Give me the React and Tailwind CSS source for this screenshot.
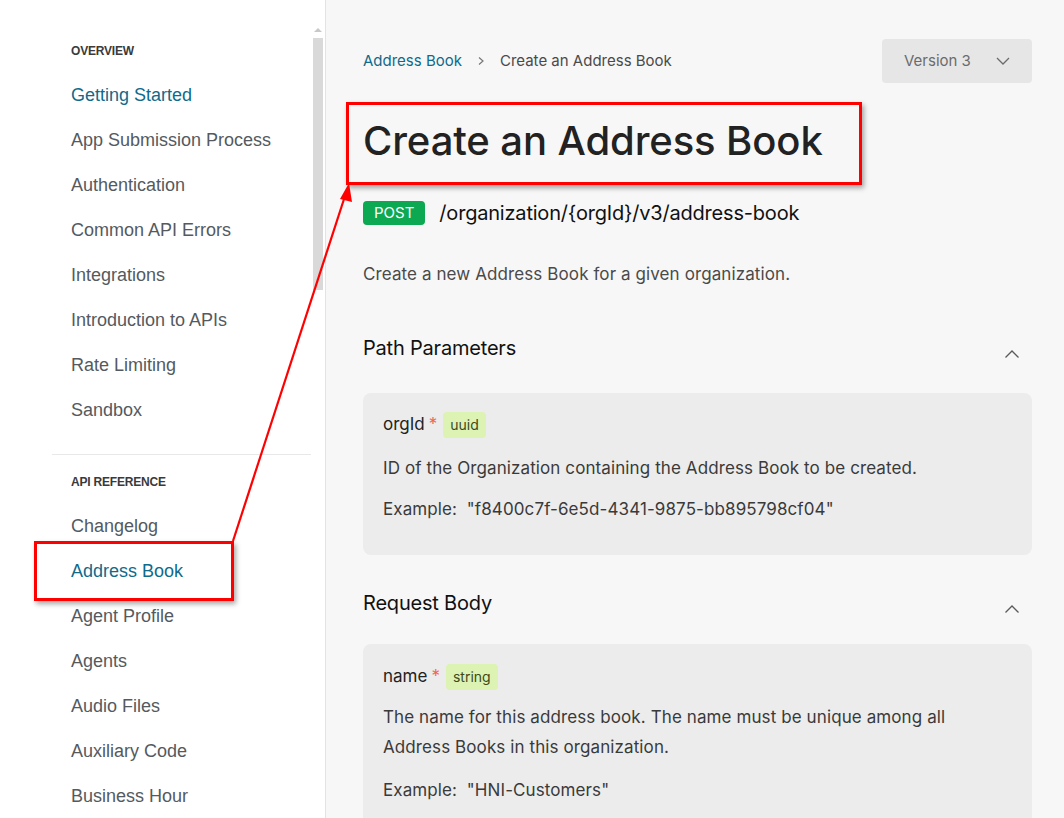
import React from "react";

const overview = [
  ["Getting Started", true],
  ["App Submission Process", false],
  ["Authentication", false],
  ["Common API Errors", false],
  ["Integrations", false],
  ["Introduction to APIs", false],
  ["Rate Limiting", false],
  ["Sandbox", false],
];
const apiRef = [
  ["Changelog", false],
  ["Address Book", true],
  ["Agent Profile", false],
  ["Agents", false],
  ["Audio Files", false],
  ["Auxiliary Code", false],
  ["Business Hour", false],
];

function NavItem({ label, active }) {
  return (
    <div
      className={
        "h-[45px] flex items-center text-[18px] " +
        (active ? "text-[#0f6a8b]" : "text-[#545a60]")
      }
    >
      {label}
    </div>
  );
}

function ChevronUp() {
  return (
    <svg width="16" height="10" viewBox="0 0 16 10" fill="none">
      <path d="M1.5 8.5 L8 2 L14.5 8.5" stroke="#5a5a5a" strokeWidth="1.3" />
    </svg>
  );
}

export default function App() {
  return (
    <div
      className="relative w-[1064px] h-[818px] overflow-hidden flex bg-[#f7f7f7]"
      style={{ fontFamily: "Inter, 'Noto Sans', sans-serif" }}
    >
      {/* Sidebar */}
      <aside
        className="relative w-[326px] shrink-0 h-full bg-white border-r border-[#e3e3e3] flex"
        style={{ fontFamily: "'Liberation Sans', Arial, sans-serif" }}
      >
        <div className="flex-1 pl-[52px] pr-[2px] pt-[40px]">
          <div className="pl-[19px]">
            <div className="h-[22px] flex items-center text-[12px] font-bold text-[#3a3a3a] tracking-[-0.2px]">
              OVERVIEW
            </div>
            <div className="mt-[11px]">
              {overview.map(([l, a]) => (
                <NavItem key={l} label={l} active={a} />
              ))}
            </div>
          </div>
          <div className="mt-[21px] border-t border-[#e8e8e8]" />
          <div className="pl-[19px] pt-[16px]">
            <div className="h-[22px] flex items-center text-[12px] font-bold text-[#3a3a3a] tracking-[-0.2px]">
              API REFERENCE
            </div>
            <div className="mt-[11px]">
              {apiRef.map(([l, a]) => (
                <NavItem key={l} label={l} active={a} />
              ))}
            </div>
          </div>
        </div>
        {/* scrollbar */}
        <div className="w-[12px] pt-[28px] pr-[2px] flex flex-col items-center">
          <div className="w-0 h-0 border-l-[4px] border-r-[4px] border-b-[4px] border-l-transparent border-r-transparent border-b-[#c8c8c8]" />
          <div className="mt-[6px] w-[10px] h-[252px] bg-[#d9d9d9]" />
        </div>
      </aside>

      {/* Main */}
      <main className="flex-1 pl-[37px] pr-[32px] pt-[39px] text-[#222]">
        <div className="flex items-start justify-between">
          <div className="flex items-center h-[44px] text-[15px]">
            <span className="text-[#0f6a8b]">Address Book</span>
            <svg className="mx-[15px]" width="8" height="10" viewBox="0 0 8 10" fill="none">
              <path d="M2 1.5 L6 5 L2 8.5" stroke="#777" strokeWidth="1.2" />
            </svg>
            <span className="text-[#4a4a4a]">Create an Address Book</span>
          </div>
          <div className="w-[150px] h-[44px] rounded-[4px] bg-[#e6e6e6] flex items-center pl-[22px] pr-[22px] justify-between">
            <span className="text-[15px] text-[#6b6b6b]">Version 3</span>
            <svg width="14" height="8" viewBox="0 0 14 8" fill="none">
              <path d="M1 1 L7 7 L13 1" stroke="#6b6b6b" strokeWidth="1.3" />
            </svg>
          </div>
        </div>

        <h1 className="mt-[30px] h-[56px] flex items-center text-[40px] font-medium tracking-[-0.1px] text-[#222]">
          Create an Address Book
        </h1>

        <div className="mt-[29px] flex items-center gap-[14px]">
          <span className="h-[24px] px-[11px] rounded-[4px] bg-[#0ca852] text-white text-[15px] flex items-center">
            POST
          </span>
          <span className="text-[20px] tracking-[-0.2px] text-[#111]">/organization/&#123;orgId&#125;/v3/address-book</span>
        </div>

        <p className="mt-[34px] text-[17px] tracking-[0.1px] text-[#4a4a4a]">
          Create a new Address Book for a given organization.
        </p>

        <div className="mt-[45px] flex items-center justify-between h-[30px]">
          <h2 className="text-[20px] tracking-[-0.2px] text-[#111]">Path Parameters</h2>
          <div className="pr-[12px] pt-[12px]">
            <ChevronUp />
          </div>
        </div>

        <div className="mt-[30px] rounded-[8px] bg-[#ececec] px-[20px] pt-[19px] h-[162px]">
          <div className="flex items-center h-[26px] text-[17px] text-[#222]">
            <span>orgId</span>
            <span className="ml-[4px] text-[#f0664f]">*</span>
            <span className="ml-[6px] h-[26px] px-[7px] rounded-[4px] bg-[#ddf3b3] text-[#3d4a20] text-[14px] flex items-center">
              uuid
            </span>
          </div>
          <p className="mt-[18px] text-[17px] tracking-[0.1px] text-[#3a3a3a]">
            ID of the Organization containing the Address Book to be created.
          </p>
          <p className="mt-[16px] text-[17px] tracking-[0.1px] text-[#3a3a3a]">
            Example:&nbsp;&nbsp;"f8400c7f-6e5d-4341-9875-bb895798cf04"
          </p>
        </div>

        <div className="mt-[33px] flex items-center justify-between h-[30px]">
          <h2 className="text-[20px] tracking-[-0.2px] text-[#111]">Request Body</h2>
          <div className="pr-[12px] pt-[12px]">
            <ChevronUp />
          </div>
        </div>

        <div className="mt-[26px] rounded-[8px] bg-[#ececec] px-[20px] pt-[20px] h-[220px]">
          <div className="flex items-center h-[26px] text-[17px] text-[#222]">
            <span>name</span>
            <span className="ml-[4px] text-[#f0664f]">*</span>
            <span className="ml-[6px] h-[26px] px-[7px] rounded-[4px] bg-[#ddf3b3] text-[#3d4a20] text-[14px] flex items-center">
              string
            </span>
          </div>
          <p className="mt-[12px] text-[17px] tracking-[0.1px] leading-[30px] text-[#3a3a3a] max-w-[590px]">
            The name for this address book. The name must be unique among all Address Books in this
            organization.
          </p>
          <p className="mt-[16px] text-[17px] tracking-[0.1px] text-[#3a3a3a]">
            Example:&nbsp;&nbsp;"HNI-Customers"
          </p>
        </div>
      </main>

      {/* Annotation overlays */}
      <div className="absolute left-[346px] top-[102px] w-[516px] h-[83px] border-[3px] border-[#ff0000] shadow-[2px_3px_5px_rgba(0,0,0,0.35)] pointer-events-none" />
      <div className="absolute left-[34px] top-[541px] w-[200px] h-[60px] border-[3px] border-[#ff0000] shadow-[2px_3px_5px_rgba(0,0,0,0.35)] pointer-events-none" />
      <svg className="absolute left-0 top-0 pointer-events-none" width="1064" height="818">
        <line x1="233" y1="541" x2="345" y2="196" stroke="#ff0000" strokeWidth="2.2" />
        <polygon points="349,183 340,199 352,202" fill="#ff0000" />
      </svg>
    </div>
  );
}
